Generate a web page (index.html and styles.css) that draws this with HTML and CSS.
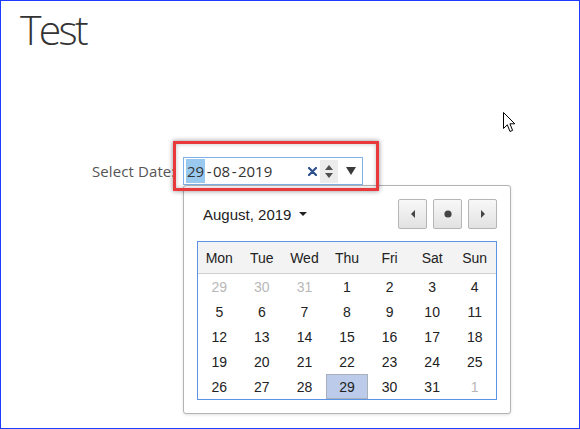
FILE: index.html
```html
<!DOCTYPE html>
<html>
<head>
<meta charset="utf-8">
<link rel="stylesheet" href="styles.css">
</head>
<body>
<div class="frame">
  <h1 class="title"><span class="tight">Tes</span>t</h1>
  <div class="field-row">
    <label class="field-label">Select Date:</label>
    <div class="date-input">
      <span class="date-text"><span class="sel">29</span><span class="sep">-</span>08<span class="sep">-</span>2019</span>
      <span class="controls">
        <svg class="clear" width="9" height="9" viewBox="0 0 9 9"><path d="M1 1 L8 8 M8 1 L1 8" stroke="#2c4f8f" stroke-width="2.2" stroke-linecap="round"/></svg>
        <span class="spin"><svg width="18" height="23" viewBox="0 0 18 23"><path d="M5 10 L9 5 L13 10 Z" fill="#505050"/><path d="M5 13 L9 18 L13 13 Z" fill="#505050"/></svg></span>
        <svg class="drop" width="10" height="8" viewBox="0 0 10 8"><path d="M0 0 L10 0 L5 8 Z" fill="#3a3a3a"/></svg>
      </span>
      <div class="popup">
        <div class="popup-head">
          <span class="month">August, 2019 <svg class="caret" width="8" height="4" viewBox="0 0 8 4"><path d="M0 0 L8 0 L4 4 Z" fill="#222"/></svg></span>
          <span class="nav">
            <span class="btn"><svg width="6" height="8" viewBox="0 0 6 8"><path d="M5 0 L5 8 L1 4 Z" fill="#444"/></svg></span>
            <span class="btn"><svg width="8" height="8" viewBox="0 0 8 8"><circle cx="4" cy="4" r="3.6" fill="#444"/></svg></span>
            <span class="btn"><svg width="6" height="8" viewBox="0 0 6 8"><path d="M1 0 L1 8 L5 4 Z" fill="#444"/></svg></span>
          </span>
        </div>
        <div class="cal">
          <div class="cal-head">
            <span>Mon</span><span>Tue</span><span>Wed</span><span>Thu</span><span>Fri</span><span>Sat</span><span>Sun</span>
          </div>
          <div class="cal-body">
            <span class="other">29</span><span class="other">30</span><span class="other">31</span><span>1</span><span>2</span><span>3</span><span>4</span>
            <span>5</span><span>6</span><span>7</span><span>8</span><span>9</span><span>10</span><span>11</span>
            <span>12</span><span>13</span><span>14</span><span>15</span><span>16</span><span>17</span><span>18</span>
            <span>19</span><span>20</span><span>21</span><span>22</span><span>23</span><span>24</span><span>25</span>
            <span>26</span><span>27</span><span>28</span><span class="active">29</span><span>30</span><span>31</span><span class="other">1</span>
          </div>
        </div>
      </div>
      <div class="highlight"></div>
    </div>
  </div>
  <svg class="cursor" width="13" height="21" viewBox="0 0 13 21"><path d="M0.5 0.5 L0.5 16.5 L4.3 12.8 L7 19.5 L9.6 18.4 L6.9 11.8 L11.8 11.8 Z" fill="#fff" stroke="#000" stroke-width="1" stroke-linejoin="miter"/></svg>
</div>
</body>
</html>
```
FILE: styles.css
```css
* { box-sizing: border-box; }
html, body { margin: 0; padding: 0; background: #fff; }
.frame {
  width: 580px;
  height: 429px;
  border: 1px solid #1e3cff;
  position: relative;
  background: #fff;
}
.title {
  margin: 0;
  padding: 0 0 0 19px;
  font-family: "Open Sans", sans-serif;
  font-weight: 300;
  font-size: 41px;
  line-height: normal;
  color: #333;
}
.tight { letter-spacing: -2.7px; }
.field-row {
  display: flex;
  align-items: center;
  margin: 100px 0 0 91px;
}
.field-label {
  width: 91px;
  flex: none;
  font-family: "Open Sans", sans-serif;
  font-size: 15px;
  letter-spacing: 0.1px;
  white-space: nowrap;
  color: #555;
}
.date-input {
  position: relative;
  width: 180px;
  height: 28px;
  border: 1px solid #7fb2ea;
  display: flex;
  align-items: center;
  padding-left: 2px;
  background: #fff;
}
.date-text {
  font-family: "Open Sans", sans-serif;
  font-size: 15px;
  color: #333;
  line-height: 22px;
  display: flex;
  align-items: center;
}
.sel { background: #99c9ef; display: inline-block; line-height: 24px; padding: 0 1px; }
.sep { margin: 0 1.5px; }
.controls {
  margin-left: auto;
  display: flex;
  align-items: center;
  padding-right: 6px;
}
.clear { margin-right: 3px; display: block; }
.spin { display: block; width: 18px; height: 23px; background: #ececec; }
.spin svg { display: block; }
.drop { margin-left: 8px; display: block; }
.highlight {
  position: absolute;
  left: -11px;
  top: -17px;
  width: 206px;
  height: 50px;
  border: 3px solid #e8393d;
  box-shadow: 0 0 5px rgba(0,0,0,0.45), inset 0 0 4px rgba(0,0,0,0.25);
  z-index: 3;
  pointer-events: none;
}
.popup {
  position: absolute;
  left: -1px;
  top: 27px;
  width: 328px;
  height: 229px;
  border: 1px solid #b4b4b4;
  border-radius: 3px;
  background: #fff;
  padding: 13px;
  z-index: 2;
  box-shadow: 0 1px 3px rgba(0,0,0,0.12);
}
.popup-head {
  display: flex;
  align-items: center;
  justify-content: space-between;
  height: 30px;
}
.month {
  margin-left: 6px;
  font-family: "Liberation Sans", Arial, sans-serif;
  font-size: 15px;
  color: #222;
  display: flex;
  align-items: center;
}
.caret { margin-left: 8px; }
.nav { display: flex; gap: 6px; }
.btn {
  width: 29px;
  height: 30px;
  border: 1px solid #b5b5b5;
  border-radius: 2px;
  background: linear-gradient(#f8f8f8, #e2e2e2);
  display: flex;
  align-items: center;
  justify-content: center;
}
.btn svg { display: block; }
.cal {
  margin-top: 12px;
  width: 300px;
  border: 1px solid #5b93e6;
  font-family: "Liberation Sans", Arial, sans-serif;
  font-size: 14px;
  color: #222;
}
.cal-head {
  display: grid;
  grid-template-columns: repeat(7, 1fr);
  height: 32px;
  background: #f3f3f3;
  border-bottom: 1px solid #cfcfcf;
}
.cal-head span, .cal-body span {
  display: flex;
  align-items: center;
  justify-content: center;
}
.cal-body {
  display: grid;
  grid-template-columns: repeat(7, 1fr);
  grid-auto-rows: 25px;
}
.cal-body .other { color: #b8b8b8; }
.cal-body .active { background: #bccbe9; border: 1px solid #aab0bb; }
.cursor {
  position: absolute;
  left: 502px;
  top: 111px;
  z-index: 5;
}
```
